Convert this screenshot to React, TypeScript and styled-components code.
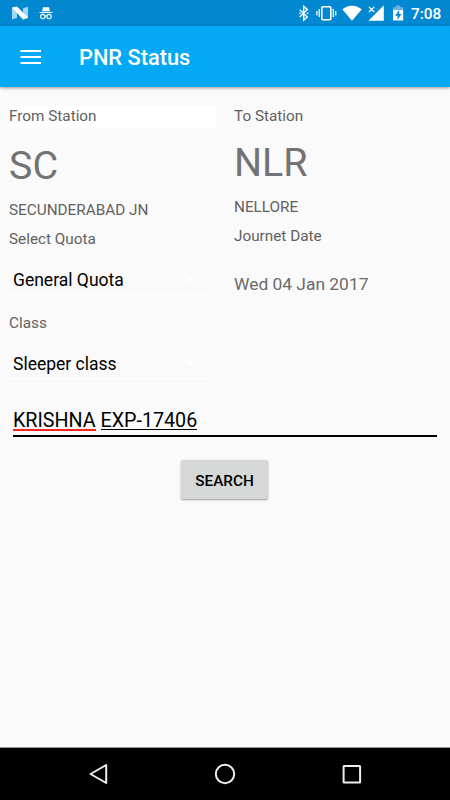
import React from "react";
import styled, { createGlobalStyle } from "styled-components";

const GlobalStyle = createGlobalStyle`
  * { box-sizing: border-box; }
  body { margin: 0; }
`;

const Screen = styled.div`
  width: 450px;
  height: 800px;
  display: flex;
  flex-direction: column;
  overflow: hidden;
  background: #fafafa;
  font-family: Roboto, sans-serif;
  color: #000;
`;

const StatusBar = styled.div`
  height: 26px;
  flex: none;
  display: flex;
  justify-content: space-between;
  background: #0288d1;
  color: #fff;
`;

const StatusGroup = styled.div`
  display: flex;
  align-items: center;
`;

const Clock = styled.span`
  width: 39px;
  font-size: 15.4px;
  line-height: 26px;
  font-weight: 500;
  padding-top: 1px;
`;

const AppBar = styled.header`
  height: 61px;
  flex: none;
  display: flex;
  align-items: center;
  padding-left: 20px;
  background: #03a9f4;
  box-shadow: 0 1px 3px rgba(0, 0, 0, 0.4);
  z-index: 1;
`;

const MenuButton = styled.button`
  display: flex;
  padding: 0;
  border: 0;
  background: none;
`;

const Title = styled.h1`
  margin: 2px 0 0 37px;
  color: #fff;
  font-size: 21.8px;
  line-height: 28px;
  font-weight: 500;
`;

const Content = styled.main`
  flex: 1;
  display: flex;
  flex-direction: column;
  padding: 18px 0 0;
`;

const Columns = styled.div`
  display: grid;
  grid-template-columns: 225px 225px;
  height: 285px;
`;

const Column = styled.section`
  padding: 0 9px;
`;

const Label = styled.div<{ $gap?: number }>`
  margin-top: ${(p) => p.$gap ?? 0}px;
  font-size: 15.3px;
  line-height: 18px;
  color: #616161;
`;

const Heading = styled(Label)<{ $filled?: boolean }>`
  line-height: 23px;
  background: ${(p) => (p.$filled ? "#fff" : "transparent")};
`;

const Code = styled.div<{ $gap: number }>`
  margin-top: ${(p) => p.$gap}px;
  font-size: 39.4px;
  line-height: 46px;
  color: #737373;
`;

const DateText = styled.div`
  margin-top: 29px;
  font-size: 17.4px;
  line-height: 21px;
  color: #6a6a6a;
`;

const Select = styled.div<{ $gap: number }>`
  display: flex;
  align-items: center;
  justify-content: space-between;
  height: 29px;
  width: 208px;
  margin: ${(p) => p.$gap}px 0 0 -5px;
  padding: 0 16px 0 9px;
  border-bottom: 1px solid #fff;
  font-size: 17.5px;
  line-height: 28px;
`;

const Field = styled.div`
  margin: 18px 13px 0;
  height: 29px;
  border-bottom: 2px solid #000;
  font-size: 19.7px;
  line-height: 27px;
  white-space: pre;
`;

const Word = styled.span<{ $misspelt?: boolean }>`
  display: inline-block;
  height: ${(p) => (p.$misspelt ? 23 : 22)}px;
  line-height: 26px;
  border-bottom: ${(p) => (p.$misspelt ? "2px solid #f22" : "1px solid #000")};
  vertical-align: top;
`;

const SearchButton = styled.button`
  align-self: center;
  width: 87px;
  height: 39px;
  margin: 23px 1px 0 0;
  padding: 2px 0 0;
  border: 0;
  border-radius: 2px;
  background: #d6d7d7;
  box-shadow: 0 1px 2px rgba(0, 0, 0, 0.38);
  color: #000;
  font: 500 15.3px/20px Roboto, sans-serif;
`;

const NavBar = styled.nav`
  height: 53px;
  flex: none;
  display: flex;
  align-items: center;
  justify-content: space-between;
  padding: 0 87px 1px;
  border-top: 1px solid #999;
  background: #000;
`;

const LeftStatusIcons = () => (
  <svg width="60" height="26" viewBox="0 0 60 26" fill="#fff">
    <path d="M12 7.5 17 9v9l-5 1.5zM23 8.2l5-1.4V18l-5 1.5z" opacity=".65" />
    <path d="M12 7.6 17 6.6 28 17.6 23 19.6z" />
    <path d="M43 7.2h6l.9 4.1h-7.8zM39.5 12h13v1h-13z" />
    <g fill="none" stroke="#fff" strokeWidth="1.1">
      <circle cx="42.8" cy="16.6" r="2.2" />
      <circle cx="49" cy="16.6" r="2.2" />
      <path d="M44.9 16.2q1-.8 2 0" />
    </g>
  </svg>
);

const RightStatusIcons = () => (
  <svg width="113" height="26" viewBox="298 0 113 26" fill="#fff">
    <path
      d="m299.7 9.7 7.6 7.2-3.6 3.2V6.4l3.6 3.2-7.6 7.3"
      fill="none"
      stroke="#fff"
      strokeWidth="1.4"
    />
    <circle cx="300" cy="13.3" r=".9" />
    <circle cx="307.5" cy="13.3" r=".9" />
    <g fill="none" stroke="#fff" strokeWidth="1.6">
      <rect x="321.8" y="6.8" width="9" height="13" rx="1" />
      <path d="M319.3 9v8M316.9 11v4.5M333.3 9v8M335.7 11v4.5" strokeWidth="1.3" />
    </g>
    <path d="M342.3 9.2Q352 2 361.8 9.2L352 20.8z" />
    <path d="M383.8 5.2v15.5h-15.4l6.3-6.3 1-1z" />
    <path d="m369 6.8 5.2 5.2m0-5.2L369 12" fill="none" stroke="#fff" strokeWidth="1.2" />
    <path d="M393 10V7.3h2.8V5.5h4.5v1.8h2.9V10z" opacity=".4" />
    <path
      fillRule="evenodd"
      d="M393 10h10.2v10.6H393zm6.2 0-4.1 5.7h2.4v4l4-5.7h-2.3z"
    />
  </svg>
);

const Caret = () => (
  <svg width="12" height="6" viewBox="0 0 12 6">
    <path d="M.5 0h11L6 5.8z" fill="#fff" />
  </svg>
);

export default function App() {
  return (
    <>
      <GlobalStyle />
      <Screen>
        <StatusBar>
          <StatusGroup>
            <LeftStatusIcons />
          </StatusGroup>
          <StatusGroup>
            <RightStatusIcons />
            <Clock>7:08</Clock>
          </StatusGroup>
        </StatusBar>
        <AppBar>
          <MenuButton aria-label="Open menu">
            <svg width="22" height="16" viewBox="0 0 22 16">
              <path d="M.5 2h20.5M.5 8h20.5M.5 14h20.5" stroke="#fff" strokeWidth="2" />
            </svg>
          </MenuButton>
          <Title>PNR Status</Title>
        </AppBar>
        <Content>
          <Columns>
            <Column>
              <Heading $filled>From Station</Heading>
              <Code $gap={15}>SC</Code>
              <Label $gap={12}>SECUNDERABAD JN</Label>
              <Label $gap={11}>Select Quota</Label>
              <Select $gap={18}>
                General Quota
                <Caret />
              </Select>
              <Label $gap={19}>Class</Label>
              <Select $gap={18}>
                Sleeper class
                <Caret />
              </Select>
            </Column>
            <Column>
              <Heading>To Station</Heading>
              <Code $gap={12}>NLR</Code>
              <Label $gap={12}>NELLORE</Label>
              <Label $gap={11}>Journet Date</Label>
              <DateText>Wed 04 Jan 2017</DateText>
            </Column>
          </Columns>
          <Field>
            <Word $misspelt>KRISHNA</Word> <Word>EXP-17406</Word>
          </Field>
          <SearchButton>SEARCH</SearchButton>
        </Content>
        <NavBar>
          <svg width="22" height="22" viewBox="0 0 22 22">
            <path
              d="M19.2 2v18L3.5 11z"
              fill="none"
              stroke="#eee"
              strokeWidth="2"
              strokeLinejoin="round"
            />
          </svg>
          <svg width="22" height="22" viewBox="0 0 22 22">
            <circle cx="11" cy="11" r="9.2" fill="none" stroke="#eee" strokeWidth="2" />
          </svg>
          <svg width="22" height="22" viewBox="0 0 22 22">
            <rect x="2.6" y="3" width="16.5" height="16.5" rx=".5" fill="none" stroke="#eee" strokeWidth="2" />
          </svg>
        </NavBar>
      </Screen>
    </>
  );
}
